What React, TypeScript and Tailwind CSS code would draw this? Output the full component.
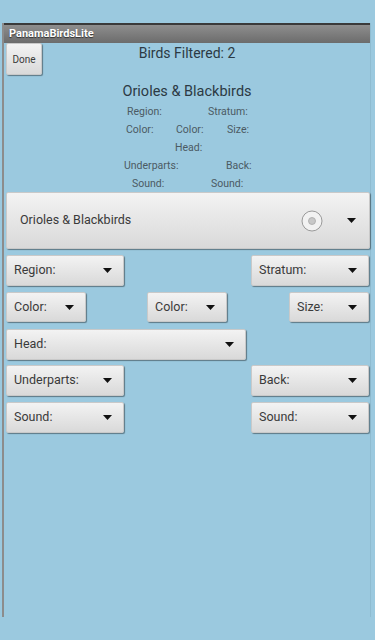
const font = { fontFamily: "Roboto, 'Noto Sans', sans-serif" };

function Arrow() {
  return (
    <svg width="9" height="5" viewBox="0 0 9 5" className="shrink-0">
      <path d="M0 0 L9 0 L4.5 5 Z" fill="#111" />
    </svg>
  );
}

function Spin({ label, w, ml, h = "h-[31px]" }: { label: string; w: string; ml: string; h?: string }) {
  return (
    <div
      className={`${w} ${ml} ${h} flex items-center justify-between pl-[7px] pr-[11px] rounded-[2px] border border-[#c9c9c9] bg-gradient-to-b from-[#f3f3f3] to-[#d9d9d9] shadow-[1px_1px_1px_rgba(0,0,0,0.4)] text-[12.5px] text-[#3a3a3a]`}
    >
      <span>{label}</span>
      <Arrow />
    </div>
  );
}

export default function App() {
  return (
    <div className="w-[375px] h-[640px] bg-[#9bc9df] pt-[23px]" style={font}>
      <div className="ml-[2px] w-[369px] h-[594px] border-l-2 border-l-[#8c8c8c] border-r border-r-[#8fbcd1]">
        {/* title bar */}
        <div className="h-[20px] border-t-2 border-t-[#3a3a3a] bg-gradient-to-b from-[#8e8e8e] to-[#6c6c6c] pl-[5px] flex items-center">
          <span className="text-[11px] font-bold text-white [text-shadow:0_1px_1px_rgba(0,0,0,0.6)]">PanamaBirdsLite</span>
        </div>

        <div className="grid grid-cols-[1fr_auto_1fr] h-[32px]">
          <div>
            <div className="ml-[2px] w-[36px] h-[32px] flex items-center justify-center rounded-[2px] border border-[#c9c9c9] bg-gradient-to-b from-[#f3f3f3] to-[#d9d9d9] shadow-[1px_1px_1px_rgba(0,0,0,0.4)] text-[10px] text-[#3a3a3a]">
              Done
            </div>
          </div>
          <div className="pt-[1px] text-[14px] leading-[18px] text-[#2c3a44]">Birds Filtered: 2</div>
          <div />
        </div>

        <div className="mt-[7px] h-[20px] flex items-center justify-center text-[14.5px] text-[#2c3a44]">
          Orioles &amp; Blackbirds
        </div>

        <div className="pt-[1px] text-[10.5px] text-[#4b5a63]">
          <div className="h-[18px] flex items-center">
            <span className="ml-[123px] w-[81px]">Region:</span>
            <span>Stratum:</span>
          </div>
          <div className="h-[18px] flex items-center">
            <span className="ml-[122px] w-[50px]">Color:</span>
            <span className="w-[51px]">Color:</span>
            <span>Size:</span>
          </div>
          <div className="h-[18px] flex items-center">
            <span className="ml-[171px]">Head:</span>
          </div>
          <div className="h-[18px] flex items-center">
            <span className="ml-[120px] w-[102px]">Underparts:</span>
            <span>Back:</span>
          </div>
          <div className="h-[18px] flex items-center">
            <span className="ml-[128px] w-[79px]">Sound:</span>
            <span>Sound:</span>
          </div>
        </div>

        {/* family spinner */}
        <div className="-mt-[1px] ml-[2px] w-[364px] h-[57px] flex items-center pl-[13px] pr-[13px] rounded-[2px] border border-[#c9c9c9] bg-gradient-to-b from-[#f3f3f3] to-[#d9d9d9] shadow-[1px_1px_1px_rgba(0,0,0,0.4)] text-[12.5px] text-[#3a3a3a]">
          <span className="flex-1">Orioles &amp; Blackbirds</span>
          <svg width="22" height="22" viewBox="0 0 22 22" className="mr-[24px]">
            <circle cx="11" cy="11" r="10" fill="#f2f2f2" stroke="#9a9a9a" strokeWidth="1" />
            <circle cx="11" cy="11" r="3.5" fill="#c8c8c8" stroke="#a8a8a8" strokeWidth="0.8" />
          </svg>
          <Arrow />
        </div>

        <div className="mt-[6px] flex">
          <Spin label="Region:" w="w-[118px]" ml="ml-[2px]" />
          <Spin label="Stratum:" w="w-[118px]" ml="ml-[127px]" />
        </div>
        <div className="mt-[6px] flex">
          <Spin label="Color:" w="w-[80px]" ml="ml-[2px]" h="h-[30px]" />
          <Spin label="Color:" w="w-[80px]" ml="ml-[61px]" h="h-[30px]" />
          <Spin label="Size:" w="w-[80px]" ml="ml-[62px]" h="h-[30px]" />
        </div>
        <div className="mt-[7px] flex">
          <Spin label="Head:" w="w-[240px]" ml="ml-[2px]" />
        </div>
        <div className="mt-[5px] flex">
          <Spin label="Underparts:" w="w-[118px]" ml="ml-[2px]" />
          <Spin label="Back:" w="w-[118px]" ml="ml-[127px]" />
        </div>
        <div className="mt-[6px] flex">
          <Spin label="Sound:" w="w-[118px]" ml="ml-[2px]" />
          <Spin label="Sound:" w="w-[118px]" ml="ml-[127px]" />
        </div>
      </div>
    </div>
  );
}
